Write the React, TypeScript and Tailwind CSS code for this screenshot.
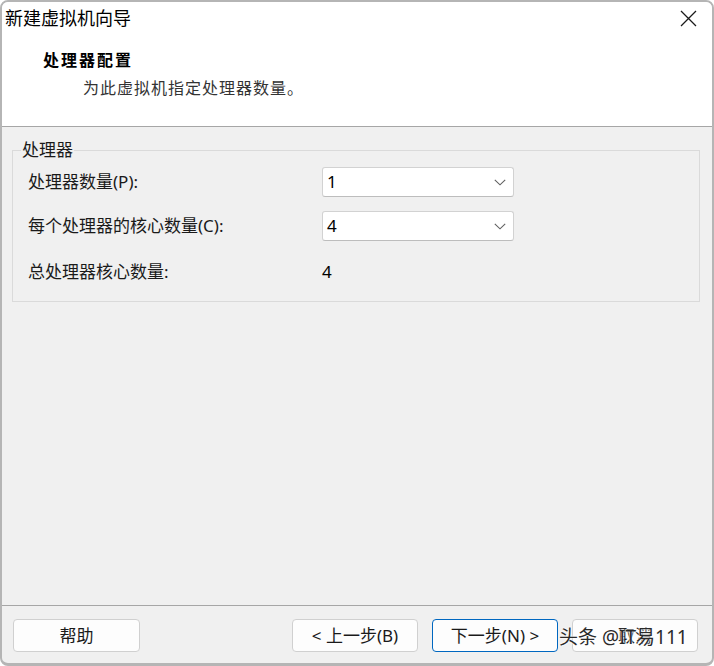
const font = "font-['Noto_Sans','Noto_Sans_CJK_SC',sans-serif]";

function CloseIcon() {
  return (
    <svg width="17" height="17" viewBox="0 0 17 17" className="block">
      <path d="M1 1 L16 16 M16 1 L1 16" stroke="#1a1a1a" strokeWidth="1.3" fill="none" />
    </svg>
  );
}

function Chevron() {
  return (
    <svg width="12" height="7" viewBox="0 0 12 7" className="block">
      <polyline points="0.8,0.8 6,5.8 11.2,0.8" stroke="#5f5f5f" strokeWidth="1.1" fill="none" />
    </svg>
  );
}

function FakeSelect({ value }: { value: string }) {
  return (
    <div className="h-[30px] w-[192px] bg-white border border-[#d2d2d2] border-b-[#bdbdbd] rounded-[3px] flex items-center justify-between pl-[4px] pr-[7px]">
      <span className="text-[17px] text-black">{value}</span>
      <Chevron />
    </div>
  );
}

function DlgButton({ label, primary, wide }: { label: string; primary?: boolean; wide?: boolean }) {
  const base =
    "h-[33px] bg-[#fdfdfd] border rounded-[4px] text-[17px] text-[#1a1a1a] flex items-center justify-center";
  return (
    <button
      type="button"
      className={`${base} ${wide ? "w-[127px]" : "w-[126px]"} ${primary ? "border-[#0067c0]" : "border-[#d0d0d0]"}`}
    >
      {label}
    </button>
  );
}

export default function App() {
  return (
    <div className={`${font} w-[714px] h-[666px] flex flex-col border-2 border-b-[3px] border-[#b5b5b5] rounded-[8px] overflow-hidden bg-[#f0f0f0]`}>
      {/* header */}
      <div className="bg-white h-[125px] border-b border-[#a6a6a6] flex flex-col">
        <div className="h-[32px] flex items-center justify-between pl-[3px] pr-[15px]">
          <span className="text-[18px] leading-[24px] text-black">新建虚拟机向导</span>
          <CloseIcon />
        </div>
        <div className="mt-[14px] pl-[41px] text-[16px] leading-[24px] font-bold tracking-[2px] text-black">
          处理器配置
        </div>
        <div className="mt-[4px] pl-[81px] text-[16px] leading-[24px] tracking-[1px] text-[#333333]">
          为此虚拟机指定处理器数量。
        </div>
      </div>

      {/* body */}
      <div className="flex-1">
        <div className="relative mt-[23px] ml-[10px] mr-[12px] border border-[#dadada] pt-[16px] pb-[14px] pl-[15px]">
          <span className="absolute left-[8px] top-[-13px] bg-[#f0f0f0] px-[1px] text-[17px] leading-[24px] text-[#1a1a1a]">
            处理器
          </span>
          <div className="grid grid-cols-[294px_192px] gap-y-[14px] items-center text-[17px] text-[#1a1a1a]">
            <span className="leading-[30px]">处理器数量(P):</span>
            <FakeSelect value="1" />
            <span className="leading-[30px]">每个处理器的核心数量(C):</span>
            <FakeSelect value="4" />
            <span className="leading-[30px] mt-[2px]">总处理器核心数量:</span>
            <span className="leading-[30px] mt-[2px] text-black">4</span>
          </div>
        </div>
      </div>

      {/* footer */}
      <div className="relative border-t border-[#a6a6a6] pt-[13px] pb-[11px] pl-[11px] pr-[14px] flex items-center justify-between">
        <DlgButton label="帮助" wide />
        <div className="flex gap-[14px]">
          <DlgButton label="< 上一步(B)" />
          <DlgButton label="下一步(N) >" primary />
          <DlgButton label="取消" />
        </div>
        <span className="absolute left-[557px] top-[18px] text-[19px] leading-[26px] text-[#2a2a2a] [text-shadow:0_0_2px_#ffffff,0_0_2px_#ffffff]">
          头条 @IT易111
        </span>
      </div>
    </div>
  );
}
